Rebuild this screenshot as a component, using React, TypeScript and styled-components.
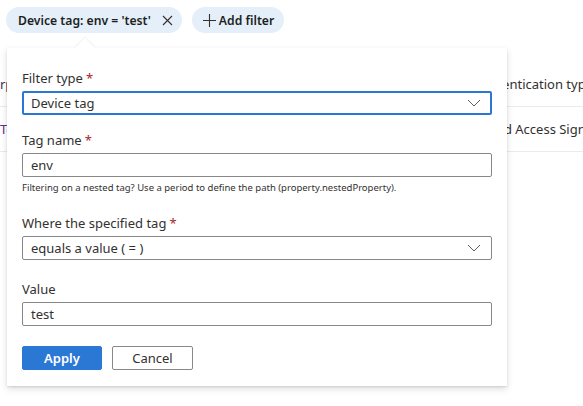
import React from "react"
import styled, { createGlobalStyle } from "styled-components"

const GlobalStyle = createGlobalStyle`
    html, body {
        margin: 0;
        padding: 0;
        background: #ffffff;
    }
    body {
        font-family: "Segoe UI", "Noto Sans", "Liberation Sans", sans-serif;
        color: #323130;
    }
`

const Page = styled.div`
    position: relative;
    width: 583px;
    height: 406px;
    overflow: hidden;
    background: #ffffff;
`

const FilterBar = styled.div`
    display: flex;
    gap: 10px;
    padding: 7px 6px;
`

const Pill = styled.div<{ $left: number; $right: number }>`
    display: flex;
    align-items: center;
    box-sizing: border-box;
    height: 26px;
    border-radius: 13px;
    background: #e5eff9;
    padding: 0 ${p => p.$right}px 0 ${p => p.$left}px;
    gap: 3px;
    font-size: 12.2px;
    font-weight: 600;
    color: #201f1e;
    white-space: nowrap;
`

const PillIcon = styled.span<{ $space?: number }>`
    display: flex;
    align-items: center;
    margin-left: ${p => p.$space || 0}px;
`

const Table = styled.div`
    margin-top: 22px;
    font-size: 13px;
`

const TableRow = styled.div`
    display: grid;
    grid-template-columns: 473px 1fr;
    height: 44px;
    align-items: center;
    border-bottom: 1px solid #edebe9;
    white-space: nowrap;
    overflow: hidden;
`

const Cell = styled.div<{ $tone?: string; $shift?: number }>`
    color: ${p => p.$tone || "#323130"};
    margin-left: ${p => p.$shift || 0}px;
`

const Callout = styled.div`
    position: absolute;
    left: 7px;
    top: 48px;
    width: 500px;
    box-sizing: border-box;
    background: #ffffff;
    padding: 21px 15px 16px;
    box-shadow: 0 3.2px 7.2px rgba(0, 0, 0, 0.13), 0 0.6px 1.8px rgba(0, 0, 0, 0.11);
`

const Beak = styled.div`
    position: absolute;
    left: 71px;
    top: -7px;
    width: 14px;
    height: 14px;
    background: #ffffff;
    transform: rotate(45deg);
    box-shadow: -1px -1px 2px rgba(0, 0, 0, 0.06);
`

const Form = styled.div`
    position: relative;
    display: flex;
    flex-direction: column;
`

const Field = styled.div<{ $gap: number }>`
    display: flex;
    flex-direction: column;
    margin-bottom: ${p => p.$gap}px;
`

const Label = styled.label`
    font-size: 13px;
    line-height: 18px;
    margin-bottom: 4px;
    color: #323130;
`

const Required = styled.span`
    color: #a4262c;
    margin-left: 3px;
`

const Box = styled.div<{ $focused?: boolean }>`
    display: flex;
    align-items: center;
    justify-content: space-between;
    box-sizing: border-box;
    height: 24px;
    border: ${p => (p.$focused ? "2px solid #2b78d4" : "1px solid #8a8886")};
    border-radius: 2px;
    padding: 0 ${p => (p.$focused ? 7 : 8)}px;
    font-size: 13px;
    color: #323130;
`

const Chevron = styled.span`
    display: flex;
    align-items: center;
    margin-right: 2px;
`

const Hint = styled.div`
    margin-top: 4px;
    font-size: 9.5px;
    line-height: 14px;
    color: #323130;
`

const Actions = styled.div`
    display: flex;
    gap: 10px;
`

const Button = styled.button<{ $primary?: boolean }>`
    box-sizing: border-box;
    height: 24px;
    width: ${p => (p.$primary ? 80 : 81)}px;
    border-radius: 2px;
    border: 1px solid ${p => (p.$primary ? "#2b78d4" : "#8a8886")};
    background: ${p => (p.$primary ? "#2b78d4" : "#ffffff")};
    color: ${p => (p.$primary ? "#ffffff" : "#323130")};
    font-family: inherit;
    font-size: 13px;
    font-weight: ${p => (p.$primary ? 600 : 400)};
    padding: 0;
`

const ChevronDown = () => (
    <svg width="14" height="8" viewBox="0 0 14 8">
        <path d="M1 1 L7 7 L13 1" fill="none" stroke="#605e5c" strokeWidth="1" />
    </svg>
)

const Dismiss = () => (
    <svg width="11" height="11" viewBox="0 0 11 11">
        <path d="M1 1 L10 10 M10 1 L1 10" stroke="#323130" strokeWidth="1.1" />
    </svg>
)

const Plus = () => (
    <svg width="13" height="13" viewBox="0 0 13 13">
        <path d="M6.5 0 V13 M0 6.5 H13" stroke="#323130" strokeWidth="1.1" />
    </svg>
)

const App = () => {
    return (
        <>
            <GlobalStyle />
            <Page>
                <FilterBar>
                    <Pill $left={12} $right={9}>
                        Device tag: env = 'test'
                        <PillIcon $space={8}>
                            <Dismiss />
                        </PillIcon>
                    </Pill>
                    <Pill $left={11} $right={10}>
                        <PillIcon>
                            <Plus />
                        </PillIcon>
                        Add filter
                    </Pill>
                </FilterBar>

                <Table>
                    <TableRow>
                        <Cell $tone="#3b2d5c" $shift={-16}>Purpose</Cell>
                        <Cell>Authentication type</Cell>
                    </TableRow>
                    <TableRow>
                        <Cell $tone="#5c2e91">Test</Cell>
                        <Cell $shift={-4}>Shared Access Signature</Cell>
                    </TableRow>
                </Table>

                <Callout>
                    <Beak />
                    <Form>
                        <Field $gap={16}>
                            <Label>
                                Filter type<Required>*</Required>
                            </Label>
                            <Box $focused>
                                Device tag
                                <Chevron>
                                    <ChevronDown />
                                </Chevron>
                            </Box>
                        </Field>
                        <Field $gap={19}>
                            <Label>
                                Tag name<Required>*</Required>
                            </Label>
                            <Box>env</Box>
                            <Hint>
                                Filtering on a nested tag? Use a period to define the path (property.nestedProperty).
                            </Hint>
                        </Field>
                        <Field $gap={20}>
                            <Label>
                                Where the specified tag<Required>*</Required>
                            </Label>
                            <Box>
                                equals a value ( = )
                                <Chevron>
                                    <ChevronDown />
                                </Chevron>
                            </Box>
                        </Field>
                        <Field $gap={20}>
                            <Label>Value</Label>
                            <Box>test</Box>
                        </Field>
                        <Actions>
                            <Button $primary>Apply</Button>
                            <Button>Cancel</Button>
                        </Actions>
                    </Form>
                </Callout>
            </Page>
        </>
    )
}

export default App
